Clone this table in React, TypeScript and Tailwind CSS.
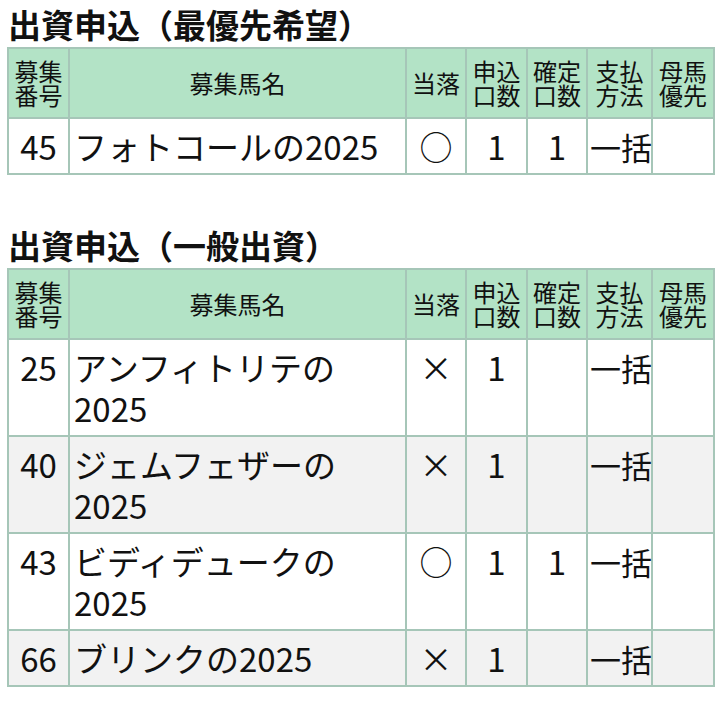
import React from "react";

interface Entry {
  no: number;
  name: string;
  result: "○" | "×";
  applied: number;
  confirmed?: number;
  payment: string;
  priority?: string;
}

const TOP_PRIORITY: Entry[] = [
  { no: 45, name: "フォトコールの2025", result: "○", applied: 1, confirmed: 1, payment: "一括" },
];

const GENERAL: Entry[] = [
  { no: 25, name: "アンフィトリテの2025", result: "×", applied: 1, payment: "一括" },
  { no: 40, name: "ジェムフェザーの2025", result: "×", applied: 1, payment: "一括" },
  { no: 43, name: "ビディデュークの2025", result: "○", applied: 1, confirmed: 1, payment: "一括" },
  { no: 66, name: "ブリンクの2025", result: "×", applied: 1, payment: "一括" },
];

const FONT = { fontFamily: '"Noto Sans CJK JP", "Noto Sans", sans-serif' };

const th = "border-2 border-[#a6c6b8] bg-[#b3e3c6] px-0 text-center align-middle text-[24px] font-normal leading-[24px]";
const td = "border-2 border-[#a6c6b8] pt-[7px] pb-[6px] align-top leading-[41px]";

function Header() {
  return (
    <thead>
      <tr className="h-[70px]">
        <th className={th}>募集<br />番号</th>
        <th className={th}>募集馬名</th>
        <th className={th}>当落</th>
        <th className={th}>申込<br />口数</th>
        <th className={th}>確定<br />口数</th>
        <th className={th}>支払<br />方法</th>
        <th className={th}>母馬<br />優先</th>
      </tr>
    </thead>
  );
}

function EntryTable({ rows }: { rows: Entry[] }) {
  return (
    <table className="w-[706px] table-fixed border-collapse text-[#111]">
      <colgroup>
        <col className="w-[61px]" />
        <col className="w-[337px]" />
        <col className="w-[60px]" />
        <col className="w-[61px]" />
        <col className="w-[60px]" />
        <col className="w-[65px]" />
        <col className="w-[62px]" />
      </colgroup>
      <Header />
      <tbody>
        {rows.map((r, i) => (
          <tr key={r.no} className={i % 2 === 1 ? "bg-[#f2f2f2]" : "bg-white"}>
            <td className={`${td} px-0 text-center text-[33px]`}>{r.no}</td>
            <td className={`${td} px-[4px] text-left text-[33px]`}>{r.name}</td>
            <td className={`${td} px-0 text-center text-[33px]`}>{r.result}</td>
            <td className={`${td} px-0 text-center text-[33px]`}>{r.applied}</td>
            <td className={`${td} px-0 text-center text-[33px]`}>{r.confirmed ?? ""}</td>
            <td className={`${td} whitespace-nowrap pl-[2px] pr-0 text-left text-[31px]`}>{r.payment}</td>
            <td className={`${td} px-0 text-center text-[33px]`}>{r.priority ?? ""}</td>
          </tr>
        ))}
      </tbody>
    </table>
  );
}

export default function App() {
  return (
    <div className="min-h-[702px] w-[720px] bg-white px-[7px] pt-[2px]" style={FONT}>
      <h2 className="pl-[1px] text-[33px] font-bold leading-[45px] text-[#111]">出資申込（最優先希望）</h2>
      <EntryTable rows={TOP_PRIORITY} />

      <h2 className="mt-[48px] pl-[1px] text-[33px] font-bold leading-[45px] text-[#111]">出資申込（一般出資）</h2>
      <EntryTable rows={GENERAL} />
    </div>
  );
}
